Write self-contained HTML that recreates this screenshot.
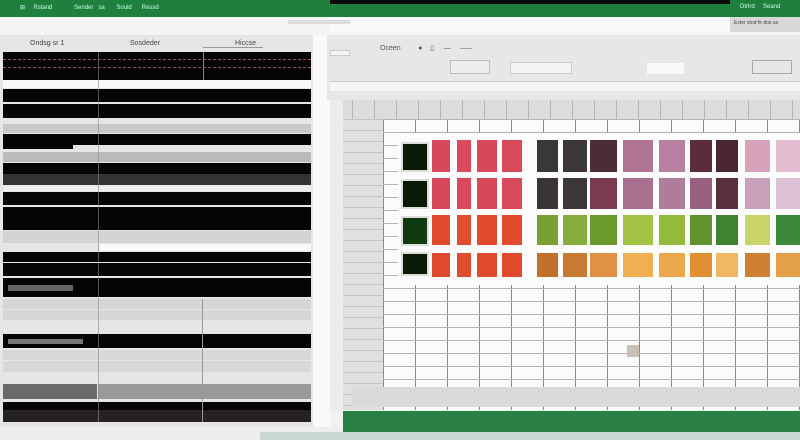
<!DOCTYPE html>
<html><head><meta charset="utf-8"><style>
*{margin:0;padding:0;box-sizing:border-box}
body{width:800px;height:440px;overflow:hidden;background:#f2f2f0;position:relative;font-family:"Liberation Sans",sans-serif;font-size:7px;color:#333}
.a{position:absolute}
.k{background:#050505}
.g{background:#c9c9c9}
.l{background:#e2e2e2}
</style></head><body>
<div class="a" style="left:0;top:0;width:800px;height:17px;background:#1f7f3d"></div>
<div class="a" style="left:330px;top:0;width:400px;height:4px;background:#0a0a0a"></div>
<div class="a" style="left:20px;top:4px;color:#cfe;font-size:6px">⊞&nbsp;&nbsp;&nbsp;&nbsp;&nbsp;Rstand&nbsp;&nbsp;&nbsp;&nbsp;&nbsp;&nbsp;&nbsp;&nbsp;&nbsp;&nbsp;&nbsp;&nbsp;&nbsp;Sender&nbsp;&nbsp;&nbsp;sa&nbsp;&nbsp;&nbsp;&nbsp;&nbsp;&nbsp;&nbsp;Sould&nbsp;&nbsp;&nbsp;&nbsp;&nbsp;&nbsp;Ressd</div>
<div class="a" style="left:740px;top:4px;color:#cfe;font-size:6px">Dtrlrd&nbsp;&nbsp;&nbsp;&nbsp;&nbsp;Seand</div>
<div class="a" style="left:0;top:17px;width:800px;height:18px;background:#f4f4f2"></div>
<div class="a" style="left:330px;top:17px;width:470px;height:15px;background:#fafafa"></div>
<div class="a" style="left:730px;top:17px;width:70px;height:15px;background:#d8d8d8;font-size:5px;padding:3px 4px;color:#444">Exter stod fe dos sa</div>
<div class="a" style="left:288px;top:20px;width:62px;height:4px;background:#ddd"></div>
<div class="a" style="left:0;top:35px;width:313px;height:392px;background:#e6e6e6"></div>
<div class="a" style="left:30px;top:40px;font-size:7px;color:#444">Ondsg sr 1</div>
<div class="a" style="left:130px;top:40px;font-size:7px;color:#444">Sosdeder</div>
<div class="a" style="left:235px;top:40px;font-size:7px;color:#444">Hiccse</div>
<div class="a" style="left:203px;top:47px;width:60px;height:1px;background:#999"></div>
<div class="a k" style="left:3px;top:52px;width:308px;height:28px"></div>
<div class="a" style="left:3px;top:59px;width:308px;height:1px;border-top:1px dashed #a05050"></div>
<div class="a" style="left:3px;top:67px;width:308px;height:1px;border-top:1px dashed #8a5550"></div>
<div class="a" style="left:3px;top:80px;width:308px;height:8px;background:#f8f8f8"></div>
<div class="a k" style="left:3px;top:89px;width:308px;height:13px"></div>
<div class="a k" style="left:3px;top:104px;width:308px;height:14px"></div>
<div class="a g" style="left:3px;top:124px;width:308px;height:9px"></div>
<div class="a k" style="left:3px;top:134px;width:308px;height:11px"></div>
<div class="a" style="left:3px;top:145px;width:70px;height:4px;background:#050505"></div>
<div class="a g" style="left:3px;top:152px;width:308px;height:10px;background:#bbb"></div>
<div class="a k" style="left:3px;top:163px;width:308px;height:11px"></div>
<div class="a" style="left:3px;top:174px;width:308px;height:11px;background:#333"></div>
<div class="a" style="left:3px;top:186px;width:308px;height:5px;background:#eee"></div>
<div class="a k" style="left:3px;top:192px;width:308px;height:13px"></div>
<div class="a k" style="left:3px;top:207px;width:308px;height:23px"></div>
<div class="a g" style="left:3px;top:231px;width:308px;height:12px;background:#d4d4d4"></div>
<div class="a" style="left:100px;top:244px;width:211px;height:7px;background:#fafafa"></div>
<div class="a k" style="left:3px;top:252px;width:308px;height:10px"></div>
<div class="a k" style="left:3px;top:263px;width:308px;height:13px"></div>
<div class="a k" style="left:3px;top:278px;width:308px;height:19px"></div>
<div class="a" style="left:8px;top:285px;width:65px;height:6px;background:#666"></div>
<div class="a g" style="left:3px;top:299px;width:308px;height:10px;background:#d6d6d6"></div>
<div class="a g" style="left:3px;top:310px;width:308px;height:10px;background:#d6d6d6"></div>
<div class="a k" style="left:3px;top:334px;width:308px;height:14px"></div>
<div class="a" style="left:8px;top:339px;width:75px;height:5px;background:#777"></div>
<div class="a g" style="left:3px;top:350px;width:308px;height:10px;background:#d8d8d8"></div>
<div class="a g" style="left:3px;top:361px;width:308px;height:11px;background:#d8d8d8"></div>
<div class="a" style="left:3px;top:384px;width:94px;height:15px;background:#6a6a6a"></div>
<div class="a" style="left:98px;top:384px;width:213px;height:15px;background:#9a9a9a"></div>
<div class="a k" style="left:3px;top:402px;width:308px;height:8px"></div>
<div class="a" style="left:3px;top:410px;width:308px;height:12px;background:#262222"></div>
<div class="a" style="left:98px;top:52px;width:1px;height:370px;background:#888;opacity:.6"></div>
<div class="a" style="left:203px;top:52px;width:1px;height:28px;background:#888"></div>
<div class="a" style="left:202px;top:299px;width:1px;height:123px;background:#999"></div>
<div class="a" style="left:313px;top:35px;width:17px;height:392px;background:#fafafa"></div>
<div class="a" style="left:327px;top:35px;width:473px;height:65px;background:#e7e7e5"></div>
<div class="a" style="left:380px;top:44px;color:#555;font-size:7px">Oceen&nbsp;&nbsp;&nbsp;&nbsp;&nbsp;&nbsp;&nbsp;&nbsp;&nbsp;●&nbsp;&nbsp;&nbsp;&nbsp;▯&nbsp;&nbsp;&nbsp;&nbsp;&nbsp;—&nbsp;&nbsp;&nbsp;&nbsp;&nbsp;‒‒‒</div>
<div class="a" style="left:330px;top:50px;width:20px;height:6px;border:1px solid #ccc;background:#f4f4f4"></div>
<div class="a" style="left:450px;top:60px;width:40px;height:14px;border:1px solid #bbb;background:#eee"></div>
<div class="a" style="left:510px;top:62px;width:62px;height:12px;background:#f4f4f4;border:1px solid #ccc"></div>
<div class="a" style="left:647px;top:63px;width:37px;height:11px;background:#fafafa"></div>
<div class="a" style="left:752px;top:60px;width:40px;height:14px;border:1px solid #aaa"></div>
<div class="a" style="left:330px;top:81px;width:470px;height:10px;background:#f5f5f5;border-top:1px solid #ccc"></div>
<div class="a" style="left:330px;top:100px;width:470px;height:19px;background:#dcdcdc;background-image:repeating-linear-gradient(90deg,#b4b4b4 0 1px,transparent 1px 22px)"></div>
<div class="a" style="left:330px;top:100px;width:13px;height:310px;background:#ececec"></div>
<div class="a" style="left:343px;top:119px;width:40px;height:291px;background:#e0e0e0;background-image:repeating-linear-gradient(180deg,#c4c4c4 0 1px,transparent 1px 11px)"></div>
<div class="a" style="left:383px;top:119px;width:417px;height:291px;background:#fbfbfb;background-image:repeating-linear-gradient(180deg,#b4b4b4 0 1px,transparent 1px 13px),repeating-linear-gradient(90deg,#8a8a8a 0 1px,transparent 1px 32px)"></div>
<div class="a" style="left:352px;top:387px;width:448px;height:20px;background:#dadada"></div>
<div class="a" style="left:627px;top:345px;width:12px;height:12px;background:#c8c0b4"></div>
<div class="a" style="left:398px;top:133px;width:402px;height:152px;background:#fcfcfc"></div>
<div id="sw"></div>
<div class="a k" style="left:401px;top:142px;width:28px;height:30px;background:#0a1a05;border:2px solid #ddd"></div>
<div class="a k" style="left:401px;top:179px;width:28px;height:30px;background:#0a1a05;border:2px solid #ddd"></div>
<div class="a k" style="left:401px;top:216px;width:28px;height:30px;background:#123a10;border:2px solid #ddd"></div>
<div class="a k" style="left:401px;top:252px;width:28px;height:24px;background:#0a1a05;border:2px solid #ddd"></div>
<div class="a" style="left:343px;top:411px;width:457px;height:21px;background:#2a7f44"></div>
<div class="a" style="left:0;top:427px;width:343px;height:13px;background:#eeeeee"></div>
<div class="a" style="left:260px;top:432px;width:540px;height:8px;background:#c9d8d0"></div>
<script>
var cols=[[432,18],[457,14],[477,20],[502,20],[537,21],[563,24],[590,27],[623,30],[659,26],[690,22],[716,22],[745,25],[776,24]];
var rows=[[140,32],[178,31],[215,30],[253,24]];
var C=[
["#d8465b","#d9485d","#d8475a","#d9495c","#3a3739","#3c383a","#4a2d38","#b07592","#b880a2","#5a2c3c","#4a2632","#d8a2ba","#e4bcd0"],
["#d8475b","#d9485d","#d8475a","#d9495c","#383438","#3a3639","#7a3a52","#a8708e","#b07c9c","#9a6080","#5a3040","#c8a0b8","#dcc0d4"],
["#e04b2c","#e24d2e","#e04a2a","#e24c2c","#7aa032","#86ae3e","#6a9a2c","#a2c244","#94ba3c","#62922e","#3e8232","#c8d468","#3a8a3a"],
["#df4a2c","#e04c2e","#df4b2c","#e14b2c","#c07028","#c87a32","#e09242","#f0b052","#eaa84a","#e09030","#f0b862","#d08032","#e4a048"]];
var h="";
rows.forEach(function(r,i){cols.forEach(function(c,j){h+='<div class="a" style="left:'+c[0]+'px;top:'+r[0]+'px;width:'+c[1]+'px;height:'+r[1]+'px;background:'+C[i][j]+'"></div>';});});
document.getElementById("sw").outerHTML=h;
</script>
</body></html>
